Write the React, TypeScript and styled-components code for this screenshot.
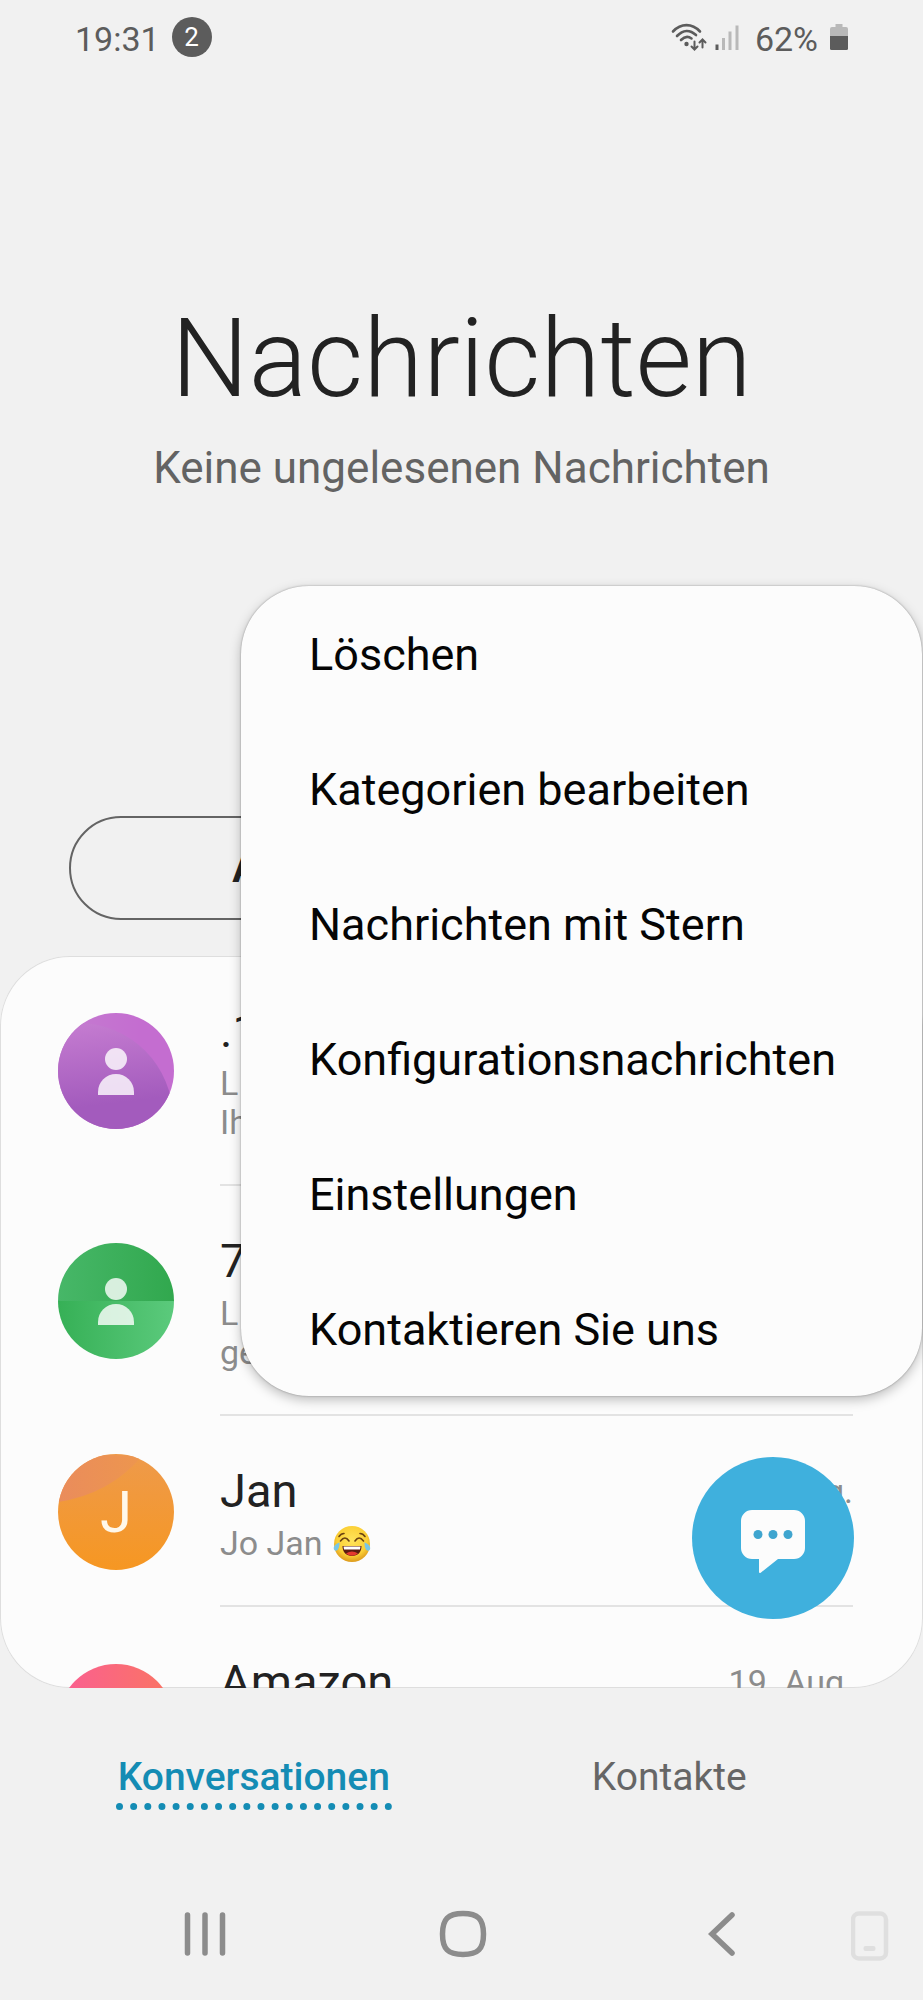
import React from 'react';
import styled, { createGlobalStyle } from 'styled-components';

const GlobalStyle = createGlobalStyle`
  *, *::before, *::after { box-sizing: border-box; }
  body { margin: 0; background: #f1f1f1; }
  button {
    margin: 0;
    padding: 0;
    border: 0;
    background: none;
    color: inherit;
    font: inherit;
    cursor: pointer;
  }
  svg { display: block; flex: none; }
`;

const Screen = styled.div`
  position: relative;
  display: flex;
  flex-direction: column;
  height: 100vh;
  overflow: hidden;
  background: #f1f1f1;
  color: #222;
  font-family: Roboto, 'Noto Sans', sans-serif;
`;

const StatusBar = styled.div`
  display: flex;
  align-items: center;
  justify-content: space-between;
  height: 73px;
  padding: 0 75px;
  color: #5c5c5c;
`;

const StatusGroup = styled.div<{ $gap: number }>`
  display: flex;
  align-items: center;
  gap: ${(p) => p.$gap}px;
`;

const StatusText = styled.span`
  padding-top: 4px;
  font-size: 34px;
  line-height: 40px;
`;

const CountBadge = styled.span`
  display: grid;
  place-items: center;
  width: 40px;
  height: 40px;
  border-radius: 50%;
  background: #5c5c5c;
  color: #fff;
  font-size: 26px;
  line-height: 40px;
`;

const Header = styled.header`
  display: flex;
  flex-direction: column;
  align-items: center;
  gap: 18px;
  height: 743px;
  padding-top: 221px;
  text-align: center;
`;

const Title = styled.h1`
  margin: 0;
  font-size: 109px;
  font-weight: 300;
  line-height: 130px;
`;

const Subtitle = styled.p`
  margin: 0;
  color: #636363;
  font-size: 44px;
  line-height: 52px;
`;

const ChipRow = styled.div`
  display: flex;
  padding: 0 69px 36px;
`;

const Chip = styled.button`
  width: 396px;
  height: 104px;
  border: 2px solid #646464;
  border-radius: 52px;
  font-size: 40px;
  font-weight: 700;
`;

const Card = styled.main`
  flex: 1;
  min-height: 0;
  overflow: hidden;
  border-radius: 70px;
  background: #fcfcfc;
  box-shadow: inset 0 0 0 1px #dedede;
`;

const List = styled.ul`
  margin: 0;
  padding: 0;
  list-style: none;
`;

const Row = styled.li`
  display: flex;
  align-items: center;
  gap: 46px;
  padding: 0 70px 0 58px;
`;

const RowBody = styled.div`
  display: flex;
  flex: 1;
  justify-content: space-between;
  padding: 42px 0;
  border-bottom: 2px solid #e3e3e3;
`;

const Name = styled.div`
  font-size: 47px;
  line-height: 66px;
`;

const Preview = styled.div`
  display: flex;
  align-items: center;
  gap: 10px;
  color: #8c8c8c;
  font-size: 34px;
  line-height: 39px;
`;

const DateText = styled.time`
  color: #8c8c8c;
  font-size: 34px;
  line-height: 66px;
`;

const Tabs = styled.nav`
  display: flex;
  height: 179px;
  padding: 65px 46px 0;
`;

const TabCell = styled.div`
  display: flex;
  flex: 1;
  align-items: flex-start;
  justify-content: center;
`;

const Tab = styled.button<{ $active?: boolean }>`
  padding: 0 2px 2px;
  border-bottom: 7px dotted ${(p) => (p.$active ? '#148cb4' : 'transparent')};
  color: ${(p) => (p.$active ? '#148cb4' : '#666')};
  font-size: 39px;
  font-weight: ${(p) => (p.$active ? 500 : 400)};
  line-height: 48px;
`;

const SystemBar = styled.div`
  display: flex;
  height: 133px;
  padding-left: 76px;
`;

const SystemButton = styled.button`
  display: flex;
  flex: 1;
  align-items: center;
  justify-content: center;
`;

const RotateButton = styled(SystemButton)`
  flex: 0 0 72px;
  justify-content: flex-start;
`;

const Menu = styled.div`
  position: absolute;
  top: 586px;
  right: 1px;
  display: flex;
  flex-direction: column;
  width: 681px;
  border-radius: 68px;
  background: #fcfcfc;
  box-shadow: 0 0 2px rgba(0, 0, 0, 0.35), 0 4px 12px rgba(0, 0, 0, 0.25);
`;

const MenuItem = styled.button`
  height: 135px;
  padding: 2px 68px 0;
  color: #050505;
  font-size: 45px;
  line-height: 52px;
  text-align: left;
`;

const ComposeButton = styled.button`
  position: absolute;
  right: 69px;
  bottom: 381px;
  width: 162px;
  height: 162px;
  border-radius: 50%;
  background: #3fb0dd;
`;

const WifiIcon = () => (
  <svg width="36" height="28" viewBox="0 0 36 28" fill="none" stroke="#5c5c5c" strokeLinecap="round">
    <path d="M2 8.500C10 0 21 0 29 8.500" strokeWidth="2.600" />
    <path d="M6 13C12 6.500 19 6.500 25 12" strokeWidth="2.600" />
    <path d="M10 17C13.500 13.500 17.500 13.300 20.500 15.500" strokeWidth="2.600" />
    <circle cx="15.500" cy="21" r="2.200" fill="#5c5c5c" stroke="none" />
    <path d="M23.500 18.500V26M20.500 23.500L23.500 26.500L26.500 23.500M31.500 24.500V17M28.500 19.500L31.500 16.500L34.500 19.500" strokeWidth="2" />
  </svg>
);

const SignalIcon = () => (
  <svg width="24" height="28" viewBox="0 0 24 28" strokeWidth="3" stroke="#b9b9b9">
    <path d="M2 21.500V27" stroke="#5c5c5c" />
    <path d="M8.500 15V27M15 8.500V27M22 2.500V27" />
  </svg>
);

const BatteryIcon = () => (
  <svg width="18" height="28" viewBox="0 0 18 28">
    <path d="M5.500 1h7v3H16a2 2 0 0 1 2 2v8H0V6a2 2 0 0 1 2-2h3.500z" fill="#b9b9b9" />
    <path d="M0 13h18v12.500a1.500 1.500 0 0 1-1.500 1.500h-15A1.500 1.500 0 0 1 0 25.500z" fill="#5c5c5c" />
  </svg>
);

const Person = () => (
  <g fill="#fff" fillOpacity="0.8">
    <circle cx="58" cy="46" r="11" />
    <path d="M40 82V79a18 18 0 0 1 36 0v3z" />
  </g>
);

type Tone = 'purple' | 'green' | 'orange' | 'pink';

const Avatar = ({ tone }: { tone: Tone }) => (
  <svg width="116" height="116" viewBox="0 0 116 116" aria-hidden="true">
    <defs>
      <clipPath id={`disc-${tone}`}>
        <circle cx="58" cy="58" r="58" />
      </clipPath>
      <linearGradient id="violetBack" x1="0" y1="0" x2="1" y2="0">
        <stop offset="0" stopColor="#c47dd0" />
        <stop offset="0.7" stopColor="#c46dd0" />
      </linearGradient>
      <linearGradient id="violet" gradientUnits="userSpaceOnUse" x1="48" y1="8" x2="58" y2="90">
        <stop offset="0" stopColor="#c47bd0" />
        <stop offset="1" stopColor="#a35bbd" />
      </linearGradient>
      <linearGradient id="leafTop">
        <stop offset="0" stopColor="#47b768" />
        <stop offset="1" stopColor="#31a84e" />
      </linearGradient>
      <linearGradient id="leafBottom">
        <stop offset="0" stopColor="#36b056" />
        <stop offset="1" stopColor="#5bca7c" />
      </linearGradient>
      <linearGradient id="amber" x1="0" y1="0" x2="0" y2="1">
        <stop offset="0" stopColor="#ee9a4b" />
        <stop offset="1" stopColor="#f69722" />
      </linearGradient>
      <linearGradient id="peach" x1="0" y1="0" x2="1" y2="0">
        <stop offset="0" stopColor="#ea8c5c" />
        <stop offset="1" stopColor="#ed964e" />
      </linearGradient>
      <linearGradient id="rose">
        <stop offset="0" stopColor="#fa5e93" />
        <stop offset="1" stopColor="#fa7562" />
      </linearGradient>
    </defs>
    <g clipPath={`url(#disc-${tone})`}>
      {tone === 'purple' && (
        <>
          <rect width="116" height="116" fill="url(#violetBack)" />
          <circle cx="20" cy="105" r="95" fill="url(#violet)" />
          <Person />
        </>
      )}
      {tone === 'green' && (
        <>
          <rect width="116" height="58" fill="url(#leafTop)" />
          <rect y="58" width="116" height="58" fill="url(#leafBottom)" />
          <Person />
        </>
      )}
      {tone === 'orange' && (
        <>
          <rect width="116" height="116" fill="url(#amber)" />
          <path d="M0 48Q52 40 84 2L0 0z" fill="url(#peach)" />
          <text x="58" y="78" textAnchor="middle" fontSize="58" fill="#fff8ea">
            J
          </text>
        </>
      )}
      {tone === 'pink' && <rect width="116" height="116" fill="url(#rose)" />}
    </g>
  </svg>
);

const JoyEmoji = () => (
  <svg width="38" height="38" viewBox="0 0 38 38" role="img" aria-label="😂">
    <defs>
      <radialGradient id="face" cx="0.5" cy="0.4" r="0.6">
        <stop offset="0" stopColor="#ffe45c" />
        <stop offset="0.7" stopColor="#fbcf35" />
        <stop offset="1" stopColor="#dd9a1c" />
      </radialGradient>
    </defs>
    <circle cx="19" cy="19" r="18" fill="url(#face)" />
    <path d="M7.500 16Q12 10 16 16M22 16Q26 10 30.500 16M6 11.500Q8 8.500 11 8.500M27 8.500Q30 8.500 32 11.500" fill="none" stroke="#6b4212" strokeWidth="1.600" strokeLinecap="round" />
    <path d="M9.500 21H28.500C28.500 27.500 24.500 31 19 31S9.500 27.500 9.500 21z" fill="#5a1c10" />
    <path d="M10.500 21.500H27.500L27 24.500H11z" fill="#fff" />
    <path d="M13 28.500Q19 24.500 25 28.500Q19 33 13 28.500z" fill="#e5392e" />
    <path d="M6.500 17.500C2.500 19 0 21.500 1 24.500C2.500 27 6.500 26 6.500 17.500zM31.500 17.500C35.500 19 38 21.500 37 24.500C35.500 27 31.500 26 31.500 17.500z" fill="#79c6e6" />
  </svg>
);

const ComposeIcon = () => (
  <svg width="162" height="162" viewBox="0 0 162 162" aria-hidden="true">
    <path d="M60 53H102a11 11 0 0 1 11 11V91a11 11 0 0 1-11 11H86L69 115.500q-2 1.500-2-1V102H60a11 11 0 0 1-11-11V64a11 11 0 0 1 11-11z" fill="#fcfcfc" />
    <g fill="#3fa5cf">
      <circle cx="66" cy="77.500" r="4.500" />
      <circle cx="81" cy="77.500" r="4.500" />
      <circle cx="96" cy="77.500" r="4.500" />
    </g>
  </svg>
);

interface Conversation {
  tone: Tone;
  name: string;
  lines: string[];
  emoji?: boolean;
  date?: string;
}

const conversations: Conversation[] = [
  { tone: 'purple', name: '.1', lines: ['L', 'Ih'] },
  { tone: 'green', name: '7', lines: ['L', 'ge'] },
  { tone: 'orange', name: 'Jan', lines: ['Jo Jan'], emoji: true, date: '21. Aug.' },
  { tone: 'pink', name: 'Amazon', lines: ['', ''], date: '19. Aug.' },
];

const menuItems = [
  'Löschen',
  'Kategorien bearbeiten',
  'Nachrichten mit Stern',
  'Konfigurationsnachrichten',
  'Einstellungen',
  'Kontaktieren Sie uns',
];

export default function App() {
  return (
    <>
      <GlobalStyle />
      <Screen>
        <StatusBar>
          <StatusGroup $gap={12}>
            <StatusText>19:31</StatusText>
            <CountBadge>2</CountBadge>
          </StatusGroup>
          <StatusGroup $gap={16}>
            <StatusGroup $gap={8}>
              <WifiIcon />
              <SignalIcon />
            </StatusGroup>
            <StatusGroup $gap={12}>
              <StatusText>62%</StatusText>
              <BatteryIcon />
            </StatusGroup>
          </StatusGroup>
        </StatusBar>

        <Header>
          <Title>Nachrichten</Title>
          <Subtitle>Keine ungelesenen Nachrichten</Subtitle>
        </Header>

        <ChipRow>
          <Chip type="button">Alle</Chip>
        </ChipRow>

        <Card>
          <List>
            {conversations.map((c) => (
              <Row key={c.tone}>
                <Avatar tone={c.tone} />
                <RowBody>
                  <div>
                    <Name>{c.name}</Name>
                    {c.lines.map((line, i) => (
                      <Preview key={i}>
                        {line || '\u00a0'}
                        {c.emoji && <JoyEmoji />}
                      </Preview>
                    ))}
                  </div>
                  {c.date && <DateText>{c.date}</DateText>}
                </RowBody>
              </Row>
            ))}
          </List>
        </Card>

        <Tabs>
          <TabCell>
            <Tab type="button" $active aria-current="page">Konversationen</Tab>
          </TabCell>
          <TabCell>
            <Tab type="button">Kontakte</Tab>
          </TabCell>
        </Tabs>

        <SystemBar>
          <SystemButton type="button" aria-label="Letzte Apps">
            <svg width="48" height="48" viewBox="0 0 48 48" stroke="#8c8c8c" strokeWidth="5.500" strokeLinecap="round">
              <path d="M6.500 5V43M24 5V43M41.500 5V43" />
            </svg>
          </SystemButton>
          <SystemButton type="button" aria-label="Startbildschirm">
            <svg width="48" height="48" viewBox="0 0 48 48" fill="none" stroke="#8c8c8c" strokeWidth="5.500">
              <path d="M24 3.500C39 3.500 44.500 9 44.500 24S39 44.500 24 44.500S3.500 39 3.500 24S9 3.500 24 3.500z" />
            </svg>
          </SystemButton>
          <SystemButton type="button" aria-label="Zurück">
            <svg width="48" height="48" viewBox="0 0 48 48" fill="none" stroke="#8c8c8c" strokeWidth="5.500" strokeLinecap="round">
              <path d="M34 5L14 24L34 43" />
            </svg>
          </SystemButton>
          <RotateButton type="button" aria-label="Anzeige drehen">
            <svg width="38" height="56" viewBox="0 0 38 56">
              <rect x="2" y="7.500" width="33" height="45" rx="6" fill="none" stroke="#dfdfdf" strokeWidth="4.500" />
              <rect x="12.500" y="40" width="12" height="5" rx="2" fill="#dfdfdf" />
            </svg>
          </RotateButton>
        </SystemBar>

        <ComposeButton type="button" aria-label="Neue Nachricht">
          <ComposeIcon />
        </ComposeButton>

        <Menu role="menu">
          {menuItems.map((item) => (
            <MenuItem key={item} type="button" role="menuitem">
              {item}
            </MenuItem>
          ))}
        </Menu>
      </Screen>
    </>
  );
}
